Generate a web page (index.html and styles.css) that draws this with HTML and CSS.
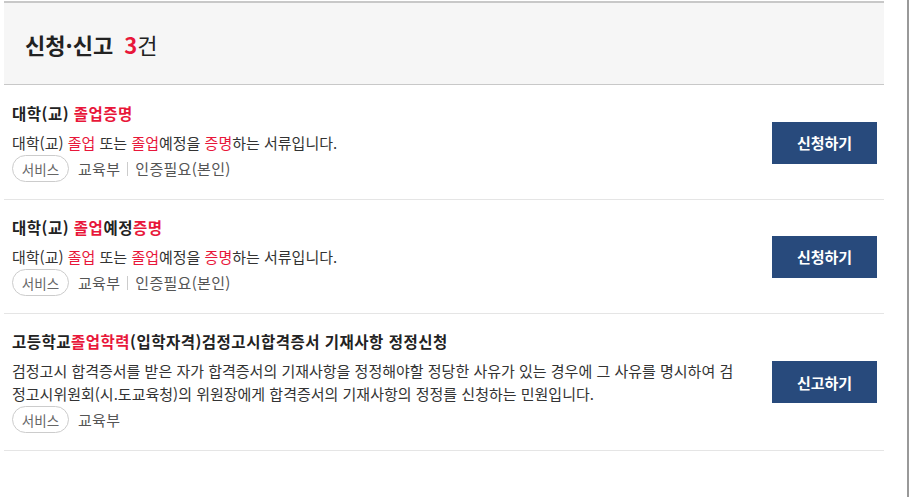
FILE: index.html
```html
<!DOCTYPE html>
<html lang="ko">
<head>
<meta charset="utf-8">
<link rel="stylesheet" href="styles.css">
</head>
<body>
<div class="frame">
  <div class="board">
    <div class="board-head">
      <h2 class="board-title">신청·신고 <span class="count"><b>3</b>건</span></h2>
    </div>
    <ul class="list">
      <li class="item">
        <div class="item-body">
          <p class="item-title">대학(교) <em>졸업증명</em></p>
          <p class="item-desc">대학(교) <em>졸업</em> 또는 <em>졸업</em>예정을 <em>증명</em>하는 서류입니다.</p>
          <div class="item-meta">
            <span class="tag">서비스</span>
            <span class="meta">교육부</span>
            <span class="bar"></span>
            <span class="meta">인증필요(본인)</span>
          </div>
        </div>
        <a class="btn">신청하기</a>
      </li>
      <li class="item">
        <div class="item-body">
          <p class="item-title">대학(교) <em>졸업</em>예정<em>증명</em></p>
          <p class="item-desc">대학(교) <em>졸업</em> 또는 <em>졸업</em>예정을 <em>증명</em>하는 서류입니다.</p>
          <div class="item-meta">
            <span class="tag">서비스</span>
            <span class="meta">교육부</span>
            <span class="bar"></span>
            <span class="meta">인증필요(본인)</span>
          </div>
        </div>
        <a class="btn">신청하기</a>
      </li>
      <li class="item">
        <div class="item-body">
          <p class="item-title">고등학교<em>졸업학력</em>(입학자격)검정고시합격증서 기재사항 정정신청</p>
          <p class="item-desc">검정고시 합격증서를 받은 자가 합격증서의 기재사항을 정정해야할 정당한 사유가 있는 경우에 그 사유를 명시하여 검정고시위원회(시.도교육청)의 위원장에게 합격증서의 기재사항의 정정를 신청하는 민원입니다.</p>
          <div class="item-meta">
            <span class="tag">서비스</span>
            <span class="meta">교육부</span>
          </div>
        </div>
        <a class="btn">신고하기</a>
      </li>
    </ul>
  </div>
</div>
</body>
</html>
```
FILE: styles.css
```css
* { box-sizing: border-box; }
html, body { margin: 0; padding: 0; background: #fff; }
body {
  font-family: "Noto Sans CJK KR", "Noto Sans", sans-serif;
  color: #333;
}
.frame {
  width: 909px;
  min-height: 497px;
  border-right: 2px solid #999;
  padding: 1px 0 0 4px;
}
.board { width: 880px; }
.board-head {
  height: 84px;
  background: #f6f6f6;
  border-top: 2px solid #c8c8c8;
  border-bottom: 1px solid #c8c8c8;
  display: flex;
  align-items: center;
  padding-left: 21px;
}
.board-title {
  margin: 0;
  font-size: 22px;
  font-weight: 700;
  color: #222;
  line-height: 30px;
}
.count { font-weight: 400; margin-left: 5px; }
.count b { color: #e8173a; font-weight: 700; }
.list { list-style: none; margin: 0; padding: 0; }
.item {
  display: flex;
  align-items: center;
  border-bottom: 1px solid #e5e5e5;
  padding: 17px 7px 17px 8px;
}
.item:first-child { padding-top: 18px; }
.item-body { width: 730px; margin-right: 30px; }
.item-title {
  margin: 0 0 8px;
  font-size: 15.5px;
  font-weight: 700;
  line-height: 20px;
  color: #222;
  letter-spacing: 0.5px;
}
em { font-style: normal; color: #e8173a; }
.item-desc {
  margin: 0;
  font-size: 15px;
  line-height: 23px;
  color: #333;
}
.item-meta {
  display: flex;
  align-items: center;
  height: 27px;
  margin-top: 1px;
  font-size: 15px;
  color: #555;
}
.tag {
  display: inline-flex;
  align-items: center;
  justify-content: center;
  width: 57px;
  height: 27px;
  border: 1px solid #ccc;
  border-radius: 14px;
  font-size: 13.5px;
  color: #666;
  margin-right: 9px;
}
.meta { letter-spacing: 0.3px; }
.bar {
  width: 1px;
  height: 14px;
  background: #ccc;
  margin: 0 7px;
}
.btn {
  display: flex;
  align-items: center;
  justify-content: center;
  width: 105px;
  height: 42px;
  background: #284a7c;
  color: #fff;
  font-size: 15px;
  font-weight: 700;
}
```
